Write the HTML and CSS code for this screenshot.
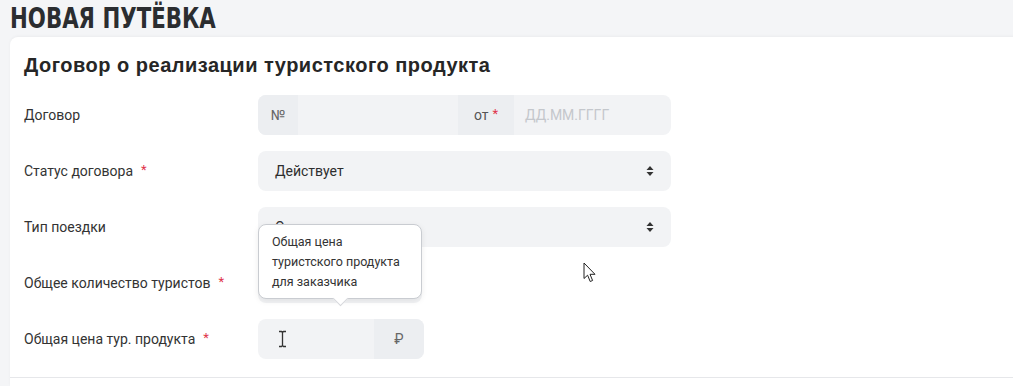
FILE: index.html
```html
<!DOCTYPE html>
<html lang="ru">
<head>
<meta charset="utf-8">
<title>Новая путёвка</title>
<link rel="stylesheet" href="styles.css">
</head>
<body>
<h1 class="page-title"><span class="page-title-text">НОВАЯ ПУТЁВКА</span></h1>
<div class="card">
  <h2 class="card-title">Договор о реализации туристского продукта</h2>
  <div class="form">
    <div class="row">
      <div class="label">Договор</div>
      <div class="group group-wide">
        <span class="addon addon-num">№</span>
        <span class="field field-num"></span>
        <span class="addon addon-from">от<span class="star">*</span></span>
        <span class="field field-date placeholder">ДД.ММ.ГГГГ</span>
      </div>
    </div>
    <div class="row">
      <div class="label">Статус договора<span class="star">*</span></div>
      <div class="select">
        <span>Действует</span>
        <svg class="caret" width="8" height="12" viewBox="0 0 8 12"><path d="M4 1 L7.5 5 H0.5 Z M4 11 L7.5 7 H0.5 Z" fill="#333"/></svg>
      </div>
    </div>
    <div class="row">
      <div class="label">Тип поездки</div>
      <div class="select">
        <span>Отдых</span>
        <svg class="caret" width="8" height="12" viewBox="0 0 8 12"><path d="M4 1 L7.5 5 H0.5 Z M4 11 L7.5 7 H0.5 Z" fill="#333"/></svg>
      </div>
    </div>
    <div class="row">
      <div class="label">Общее количество туристов<span class="star">*</span></div>
      <div class="group group-count">
        <span class="field"></span>
      </div>
    </div>
    <div class="row">
      <div class="label">Общая цена тур. продукта<span class="star">*</span></div>
      <div class="group group-price">
        <span class="field field-price">
          <svg class="ibeam" width="9" height="18" viewBox="0 0 9 18"><path d="M1 1.5 H3.5 L4.5 2.5 L5.5 1.5 H8 M4.5 2.5 V15.5 M1 16.5 H3.5 L4.5 15.5 L5.5 16.5 H8" fill="none" stroke="#333" stroke-width="1.3"/></svg>
        </span>
        <span class="addon addon-rub">₽</span>
        <div class="tooltip">Общая цена туристского продукта для заказчика</div>
      </div>
    </div>
  </div>
  <div class="divider"></div>
  <svg class="pointer" width="14" height="22" viewBox="0 0 14 22"><path d="M1 1 V16.5 L4.6 13.2 L7.2 19.5 L9.6 18.5 L7 12.3 H12 Z" fill="#fff" stroke="#222" stroke-width="1" stroke-linejoin="round"/></svg>
</div>
</body>
</html>
```

FILE: styles.css
```css
html, body {
  margin: 0;
  padding: 0;
}
body {
  background: #f4f5f7;
  font-family: Roboto, "Noto Sans", sans-serif;
  color: #333;
  height: 386px;
  overflow: hidden;
}
.page-title {
  margin: 0;
  padding: 3px 0 0 10px;
  height: 33px;
  box-sizing: border-box;
  font-family: "DejaVu Sans Condensed", "DejaVu Sans", sans-serif;
  font-stretch: condensed;
  font-weight: 700;
  font-size: 28px;
  line-height: 32px;
  color: #2b2d30;
  white-space: nowrap;
}
.page-title-text {
  display: inline-block;
  transform: scaleX(0.845);
  transform-origin: left center;
}
.card {
  position: relative;
  margin: 4px -20px 0 10px;
  background: #fff;
  border-radius: 8px 8px 0 0;
  box-shadow: 0 -1px 3px rgba(0,0,0,0.04);
  padding: 16px 0 0 14px;
  height: 349px;
  box-sizing: border-box;
  overflow: hidden;
}
.card-title {
  margin: 0;
  font-family: "Liberation Sans", Arial, sans-serif;
  font-weight: 700;
  font-size: 20px;
  letter-spacing: 0.5px;
  line-height: 24px;
  color: #262626;
}
.form {
  margin-top: 18px;
  display: flex;
  flex-direction: column;
  gap: 16px;
}
.row {
  display: flex;
  align-items: center;
  height: 40px;
}
.label {
  width: 234px;
  flex: none;
  font-size: 14px;
  color: #333;
}
.star {
  color: #e0344a;
  font-size: 13px;
  margin-left: 8px;
  position: relative;
  top: -2px;
}
.group {
  position: relative;
  display: flex;
  height: 40px;
  border-radius: 8px;
  background: #f2f3f5;
}
.group-wide { width: 413px; }
.group-count { width: 164px; }
.group-price { width: 166px; }
.addon {
  display: flex;
  align-items: center;
  background: #eceef1;
  font-size: 14px;
  color: #555;
}
.addon-num {
  width: 40px;
  justify-content: center;
  border-radius: 8px 0 0 8px;
  color: #666;
}
.addon-from {
  width: 56px;
  padding-left: 16px;
  box-sizing: border-box;
}
.addon-from .star { margin-left: 4px; }
.addon-rub {
  width: 50px;
  justify-content: center;
  border-radius: 0 8px 8px 0;
  color: #666;
}
.field {
  flex: 1;
  display: flex;
  align-items: center;
  font-size: 14px;
}
.field-num { flex: none; width: 160px; }
.field-date {
  padding-left: 11px;
  color: #c4c7cc;
}
.field-price {
  flex: none;
  width: 116px;
  padding-left: 20px;
  box-sizing: border-box;
}
.select {
  width: 413px;
  height: 40px;
  box-sizing: border-box;
  border-radius: 8px;
  background: #f2f3f5;
  display: flex;
  align-items: center;
  justify-content: space-between;
  padding: 0 17px;
  font-size: 14px;
  color: #2e2e2e;
}
.tooltip {
  position: absolute;
  left: 0;
  bottom: 60px;
  width: 164px;
  box-sizing: border-box;
  background: #fff;
  border: 1px solid #c9ccd1;
  border-radius: 8px;
  box-shadow: 0 2px 6px rgba(0,0,0,0.08);
  padding: 7px 14px 6px 13px;
  font-size: 12.5px;
  line-height: 20px;
  color: #333;
}
.tooltip::after {
  content: "";
  position: absolute;
  left: 76px;
  bottom: -6px;
  width: 10px;
  height: 10px;
  background: #fff;
  border-right: 1px solid #d6d8dc;
  border-bottom: 1px solid #d6d8dc;
  transform: rotate(45deg);
}
.divider {
  margin: 18px 0 0 -14px;
  border-top: 1px solid #e6e7ea;
}
.pointer {
  position: absolute;
  left: 573px;
  top: 225px;
}
```
